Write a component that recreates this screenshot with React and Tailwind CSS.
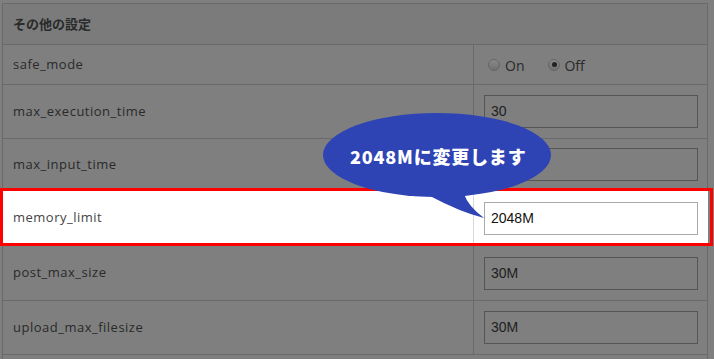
import React from "react";

const rows = [
  { label: "max_execution_time", value: "30", h: "h-[54px]" },
  { label: "max_input_time", value: "", h: "h-[52px]" },
  { label: "memory_limit", value: "2048M", h: "h-[55px]", hl: true },
  { label: "post_max_size", value: "30M", h: "h-[55px]" },
  { label: "upload_max_filesize", value: "30M", h: "h-[54px]" },
];

function Radio({ checked }) {
  return (
    <span className="w-[12px] h-[12px] rounded-full border border-[#666] bg-gradient-to-b from-[#8a8a8a] to-[#6f6f6f] flex items-center justify-center">
      {checked && <span className="w-[5px] h-[5px] rounded-full bg-[#222]"></span>}
    </span>
  );
}

function App() {
  return (
    <div
      className="relative w-[714px] h-[359px] overflow-hidden bg-[#7f7f7f]"
      style={{ fontFamily: '"Open Sans", "Noto Sans CJK JP", sans-serif' }}
    >
      <div className="ml-[2px] mt-[3px] w-[706px] border-l border-t border-[#6a6a6a] text-[13px] tracking-[0.5px] text-[#2a2a2a]">

        {/* HEADER */}
        <div className="h-[41px] flex items-center pl-[10px] border-r border-b border-[#6a6a6a] bg-[#7b7b7b]">
          <span className="font-bold tracking-normal" style={{ fontFamily: '"Noto Sans CJK JP", sans-serif' }}>
            その他の設定
          </span>
        </div>

        {/* SAFE MODE */}
        <div className="grid grid-cols-[471px_1fr] h-[40px]">
          <div className="flex items-center pl-[10px] border-r border-b border-[#6a6a6a]">safe_mode</div>
          <div className="flex items-center pl-[14px] border-r border-b border-[#6a6a6a] text-[14px] tracking-normal">
            <Radio />
            <span className="ml-[5px] mt-[2px]">On</span>
            <span className="ml-[24px]"><Radio checked /></span>
            <span className="ml-[4px] mt-[2px]">Off</span>
          </div>
        </div>

        {/* INPUT ROWS */}
        {rows.map((row) => (
          <div
            key={row.label}
            className={`grid grid-cols-[471px_1fr] ${row.h} ${row.hl ? "bg-white text-[#444]" : ""}`}
          >
            <div
              className={`flex items-center pl-[10px] border-r border-b ${
                row.hl ? "border-r-[#d8d8d8] border-b-white" : "border-[#6a6a6a]"
              }`}
            >
              {row.label}
            </div>
            <div
              className={`flex items-center pl-[10px] border-r border-b ${
                row.hl ? "border-white" : "border-[#6a6a6a]"
              }`}
            >
              <div
                className={`w-[214px] h-[33px] flex items-center pl-[6px] text-[14px] tracking-normal border ${
                  row.hl ? "border-[#a9a9a9] text-[#111] bg-white" : "border-[#555] text-[#1e1e1e]"
                }`}
                style={{ fontFamily: '"Liberation Sans", Arial, sans-serif' }}
              >
                {row.value}
              </div>
            </div>
          </div>
        ))}
        <div className="h-[10px] border-r border-[#6a6a6a]"></div>
      </div>

      {/* RED HIGHLIGHT */}
      <div className="absolute left-0 top-[188px] w-[713px] h-[58px] border-[3px] border-[#ff0000]"></div>

      {/* BUBBLE */}
      <svg className="absolute left-0 top-0" width="714" height="359">
        <path d="M430 196 Q460 212 484 218 Q468 206 464 194 Z" fill="#2f44b4" />
        <ellipse cx="437" cy="155" rx="114" ry="42" fill="#2f44b4" />
      </svg>
      <div
        className="absolute left-[350px] top-[143px] text-white text-[18px] font-black tracking-[0.8px] leading-[26px]"
        style={{ fontFamily: '"Noto Sans CJK JP", sans-serif' }}
      >
        2048Mに変更します
      </div>
    </div>
  );
}

export default App;
